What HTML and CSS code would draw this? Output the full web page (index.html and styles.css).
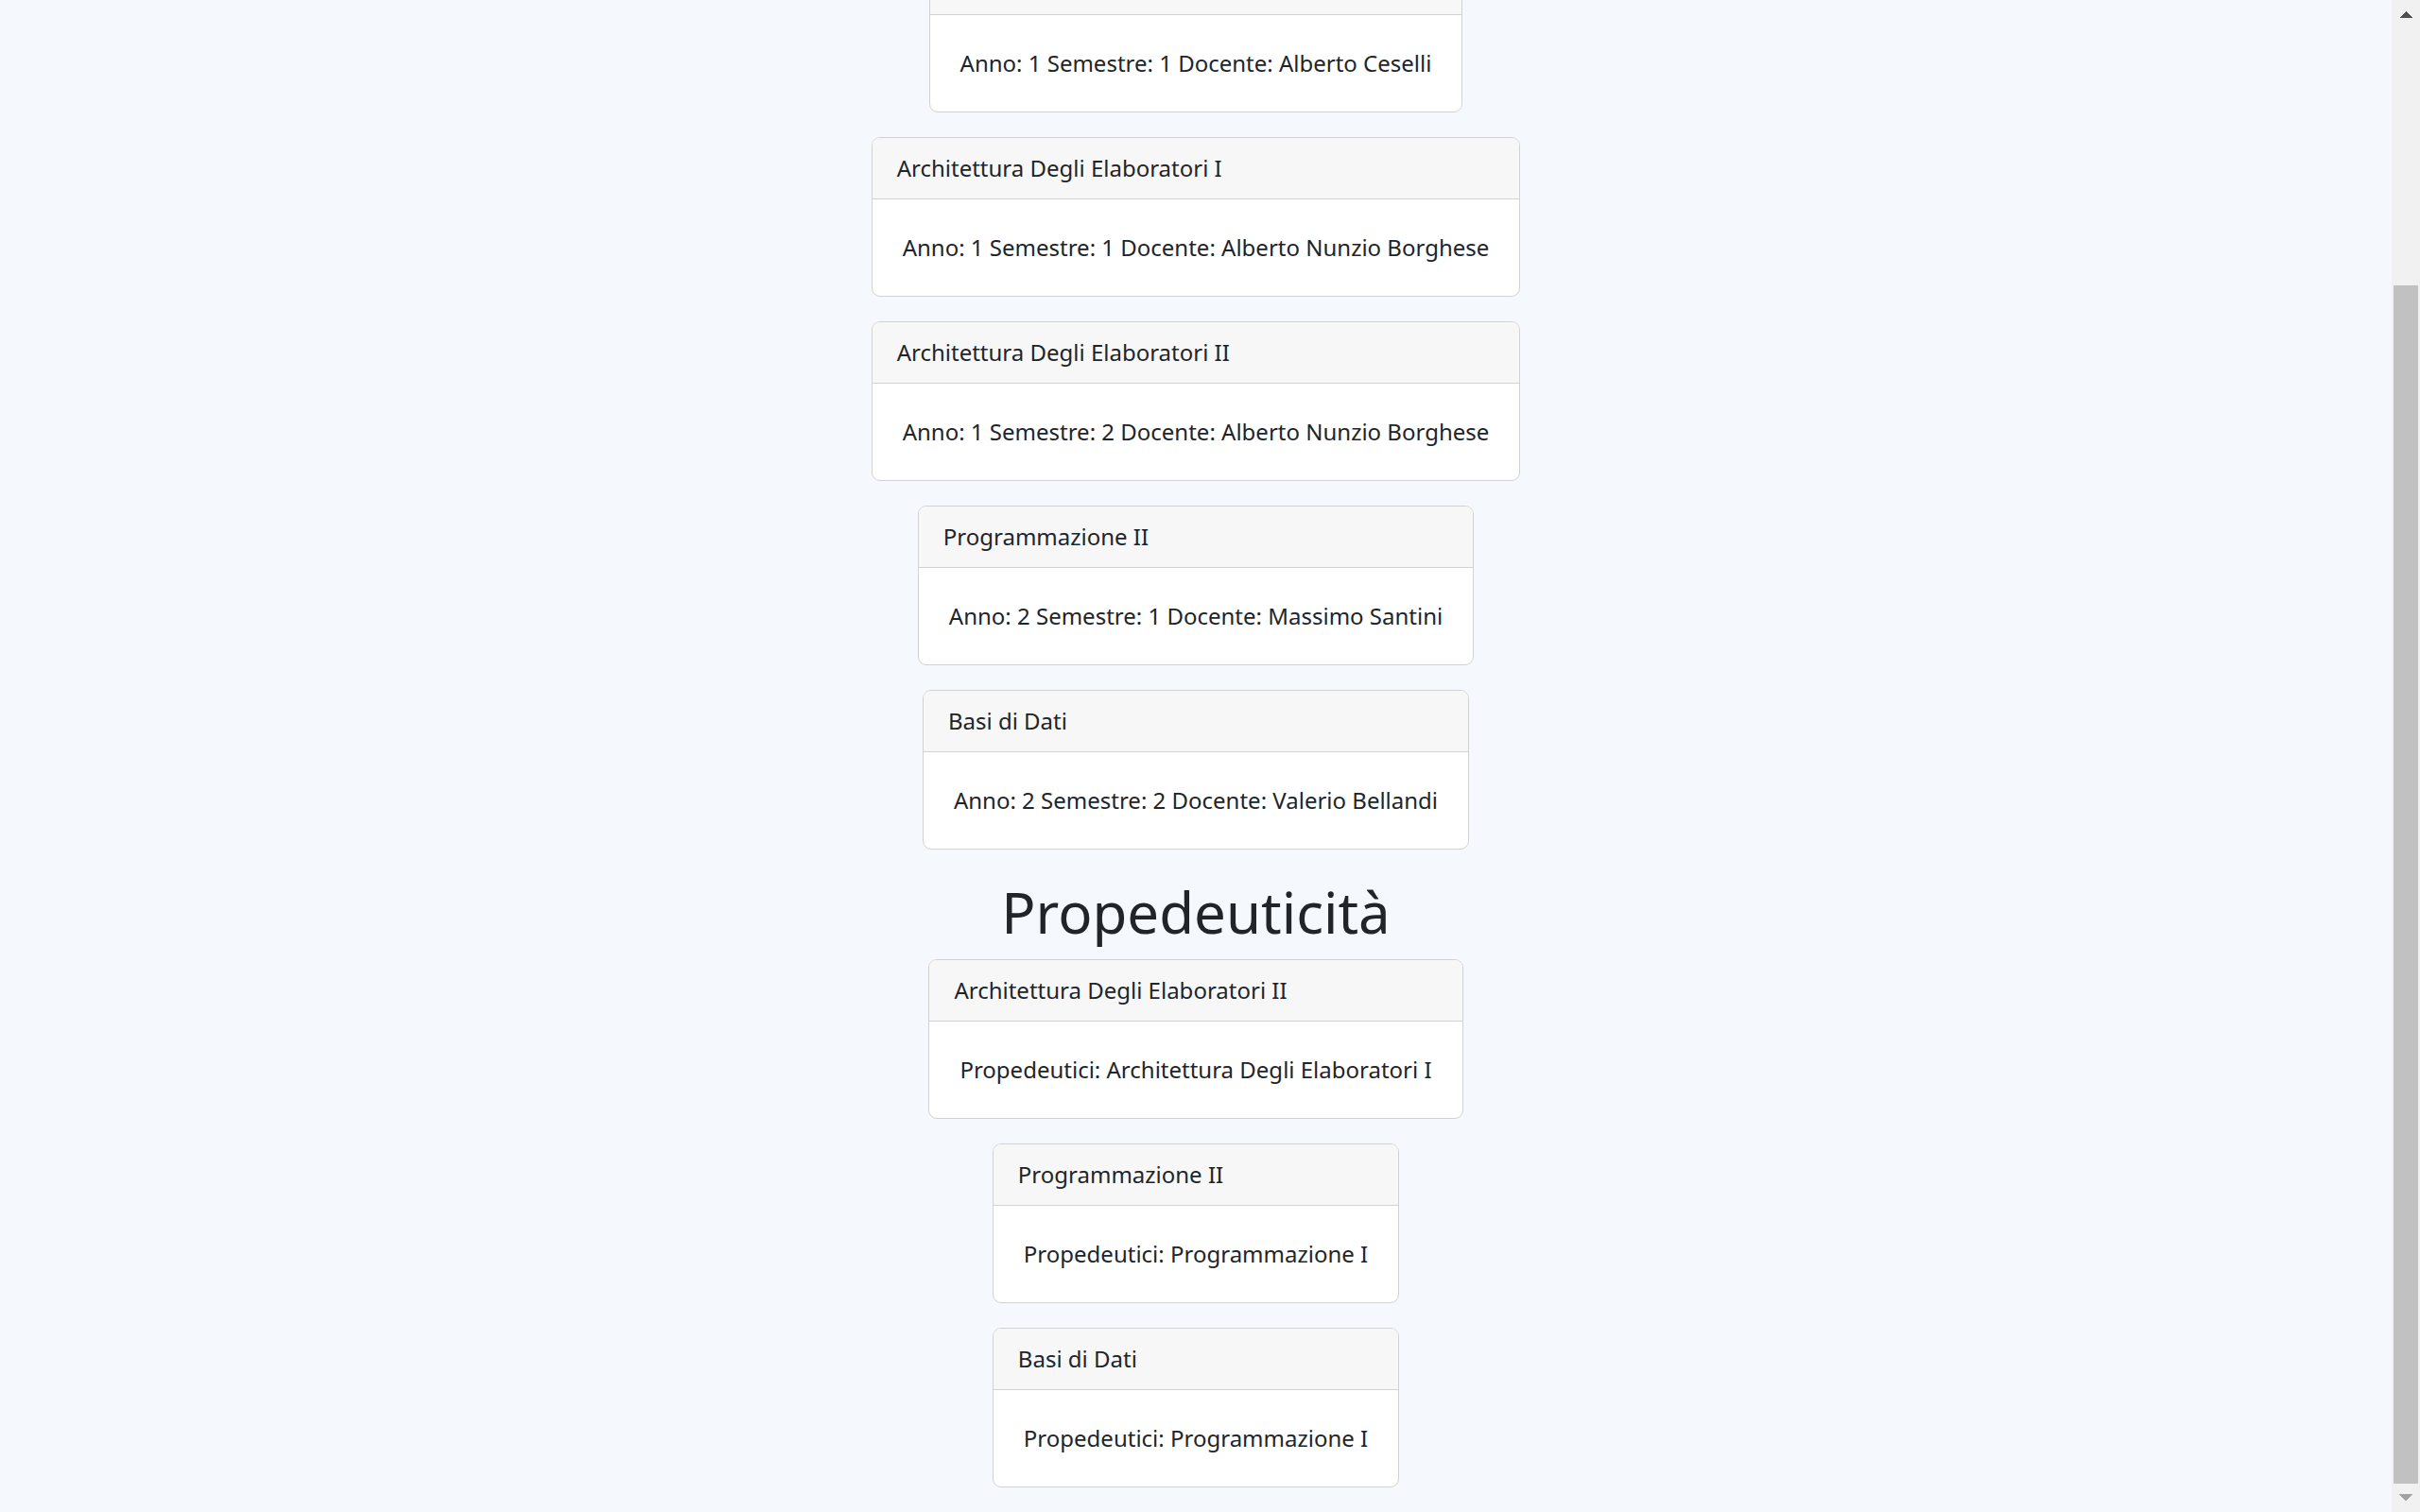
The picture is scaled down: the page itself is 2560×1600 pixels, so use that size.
FILE: index.html
```html
<!DOCTYPE html>
<html lang="it">
<head>
<meta charset="utf-8">
<title>Corsi e Propedeuticità</title>
<link rel="stylesheet" href="styles.css">
</head>
<body>
<main class="page">
  <h1 class="title">Corsi</h1>

  <section class="card">
    <div class="card-header">Matematica del Continuo</div>
    <div class="card-body">Anno: 1 Semestre: 1 Docente: Stefano Aguzzoli</div>
  </section>

  <section class="card">
    <div class="card-header">Programmazione I</div>
    <div class="card-body">Anno: 1 Semestre: 1 Docente: Alberto Ceselli</div>
  </section>

  <section class="card">
    <div class="card-header">Architettura Degli Elaboratori I</div>
    <div class="card-body">Anno: 1 Semestre: 1 Docente: Alberto Nunzio Borghese</div>
  </section>

  <section class="card">
    <div class="card-header">Architettura Degli Elaboratori II</div>
    <div class="card-body">Anno: 1 Semestre: 2 Docente: Alberto Nunzio Borghese</div>
  </section>

  <section class="card">
    <div class="card-header">Programmazione II</div>
    <div class="card-body">Anno: 2 Semestre: 1 Docente: Massimo Santini</div>
  </section>

  <section class="card">
    <div class="card-header">Basi di Dati</div>
    <div class="card-body">Anno: 2 Semestre: 2 Docente: Valerio Bellandi</div>
  </section>

  <h1 class="title">Propedeuticità</h1>

  <section class="card">
    <div class="card-header">Architettura Degli Elaboratori II</div>
    <div class="card-body">Propedeutici: Architettura Degli Elaboratori I</div>
  </section>

  <section class="card">
    <div class="card-header">Programmazione II</div>
    <div class="card-body">Propedeutici: Programmazione I</div>
  </section>

  <section class="card">
    <div class="card-header">Basi di Dati</div>
    <div class="card-body">Propedeutici: Programmazione I</div>
  </section>
</main>

<div class="scrollbar" aria-hidden="true">
  <div class="sb-button sb-up"></div>
  <div class="sb-track">
    <div class="sb-thumb" id="sb-thumb"></div>
  </div>
  <div class="sb-button sb-down"></div>
</div>

<script src="script.js"></script>
</body>
</html>
```

FILE: styles.css
```css
html {
  background: #f5f9fe;
}

body {
  margin: 0;
  background: #f5f9fe;
  color: #212529;
  font-family: "Noto Sans", "Open Sans", sans-serif;
  font-size: 24px;
  line-height: 36px;
}

.page {
  display: flex;
  flex-direction: column;
  align-items: center;
  padding-top: 8px;
  padding-right: 30px;
}

.title {
  margin: 0 0 10px;
  font-size: 60px;
  line-height: 80px;
  font-weight: 400;
}

.card {
  background: #ffffff;
  border: 1px solid #d2d2d2;
  border-radius: 9px;
  margin-bottom: 26px;
  overflow: hidden;
}

.card-header {
  background: #f7f7f7;
  border-bottom: 1px solid #d2d2d2;
  padding: 14px 26px;
  text-align: left;
}

.card-body {
  padding: 33px 32px;
  text-align: center;
}

/* window scrollbar, drawn over the right edge of the viewport */
.scrollbar {
  position: fixed;
  top: 0;
  right: 0;
  bottom: 0;
  width: 30px;
  background: #f1f1f1;
  display: flex;
  flex-direction: column;
}

.sb-button {
  flex: 0 0 30px;
  background-repeat: no-repeat;
  background-size: 14px 7px;
}

.sb-up {
  background-image: conic-gradient(from 135deg at 50% 0, #505050 90deg, transparent 0);
  background-position: 8px 12px;
}

.sb-down {
  background-image: conic-gradient(from -45deg at 50% 100%, #a3a3a3 90deg, transparent 0);
  background-position: 8px 11px;
}

.sb-track {
  flex: 1 1 auto;
  display: flex;
  flex-direction: column;
  justify-content: flex-end;
}

.sb-thumb {
  height: 1270px;
  margin: 0 2px;
  background: #c1c1c1;
}
```

FILE: script.js
```js
function toBottom() {
  var doc = document.documentElement;
  window.scrollTo(0, doc.scrollHeight);
  var thumb = document.getElementById('sb-thumb');
  var track = thumb.parentNode;
  var h = Math.round(track.clientHeight * window.innerHeight / doc.scrollHeight);
  thumb.style.height = h + 'px';
}
toBottom();
window.addEventListener('load', toBottom);
```
